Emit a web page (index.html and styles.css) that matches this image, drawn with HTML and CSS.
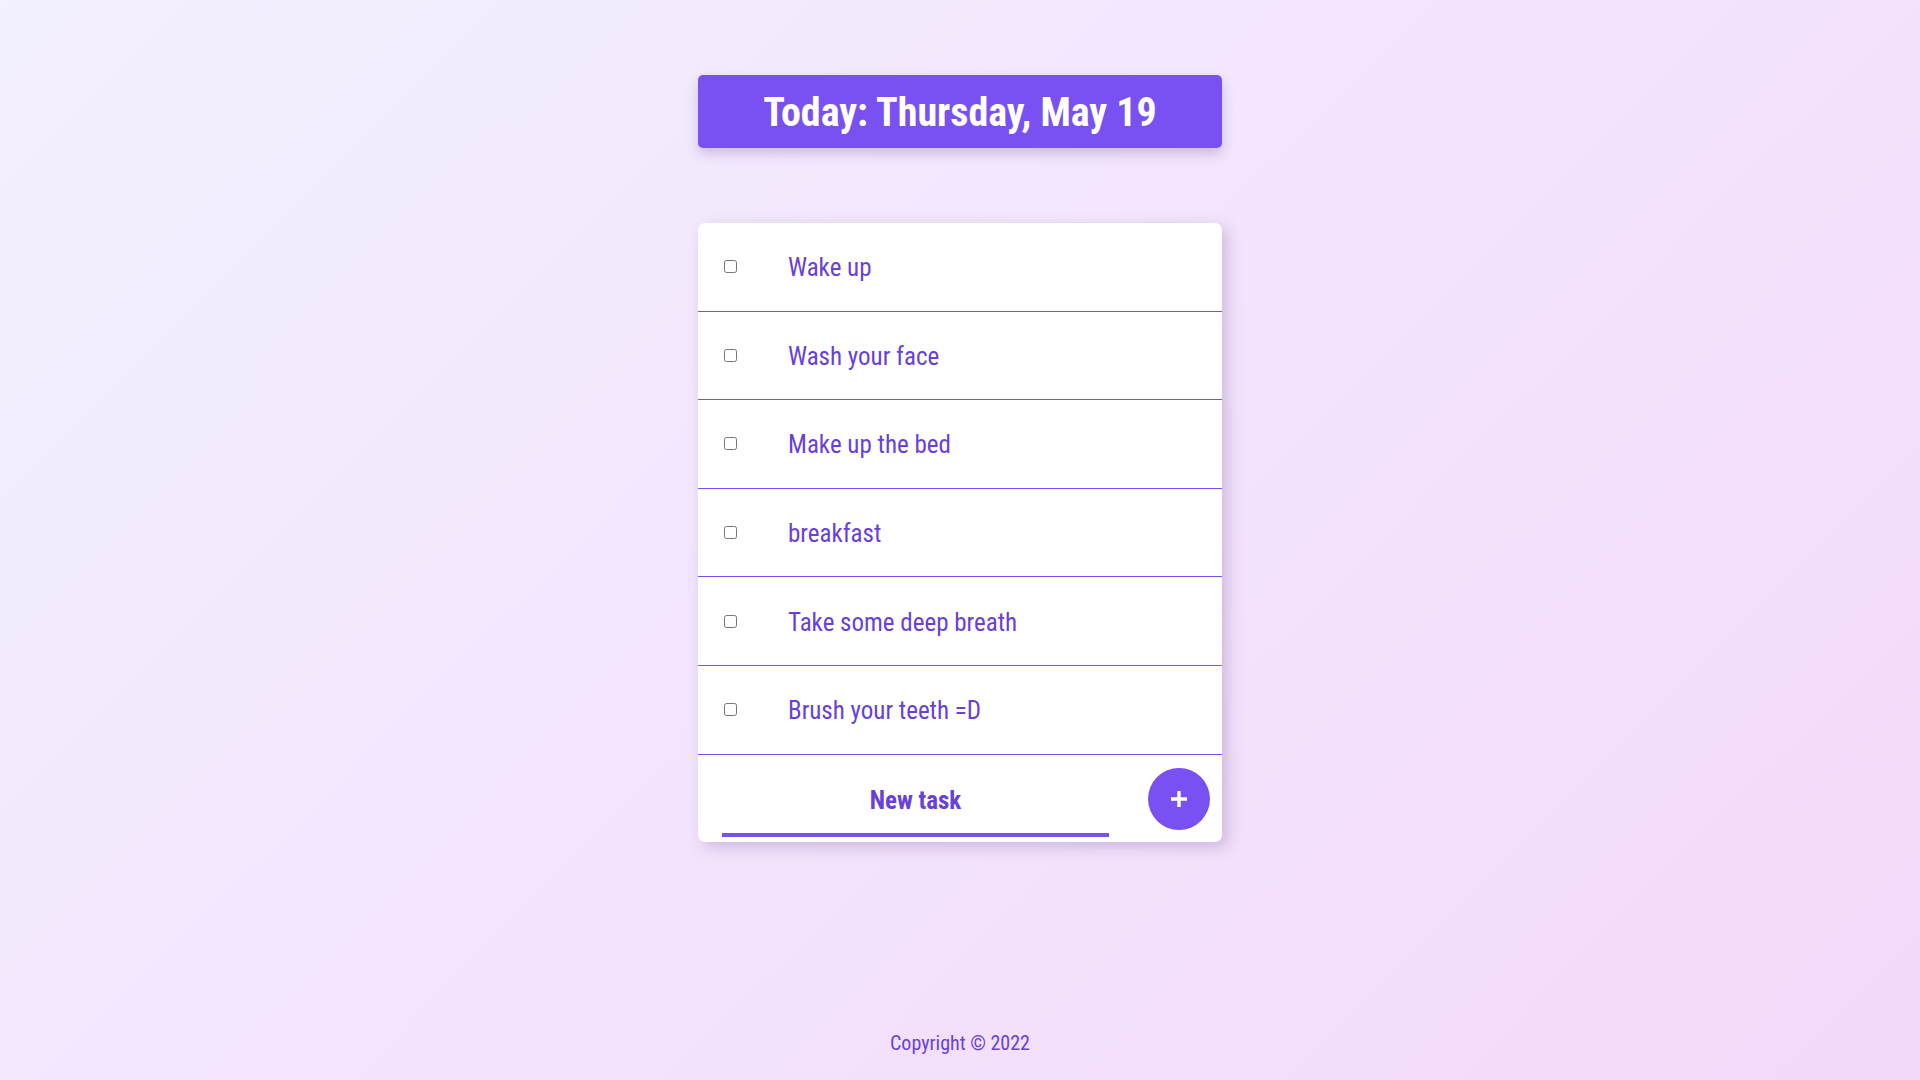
FILE: index.html
```html
<!DOCTYPE html>
<html lang="en">
<head>
<meta charset="utf-8">
<title>To-do</title>
<link rel="stylesheet" href="styles.css">
</head>
<body>
  <header class="heading">
    <h1 class="heading-title">Today: Thursday, May 19</h1>
  </header>
  <main class="box">
    <div class="item"><input type="checkbox" class="check"><p class="label">Wake up</p></div>
    <div class="item"><input type="checkbox" class="check"><p class="label">Wash your face</p></div>
    <div class="item"><input type="checkbox" class="check"><p class="label">Make up the bed</p></div>
    <div class="item"><input type="checkbox" class="check"><p class="label">breakfast</p></div>
    <div class="item"><input type="checkbox" class="check"><p class="label">Take some deep breath</p></div>
    <div class="item"><input type="checkbox" class="check"><p class="label">Brush your teeth =D</p></div>
    <form class="new-item">
      <input type="text" class="new-input" placeholder="New task" autocomplete="off">
      <button type="button" class="add-btn" aria-label="Add">
        <svg width="20" height="20" viewBox="0 0 20 20"><path d="M10 2v16M2 10h16" stroke="#fff" stroke-width="3.4" fill="none"/></svg>
      </button>
    </form>
  </main>
  <footer class="footer">Copyright © 2022</footer>
</body>
</html>
```

FILE: styles.css
```css
html, body {
  margin: 0;
  padding: 0;
}
body {
  min-height: 1080px;
  box-sizing: border-box;
  background: linear-gradient(135deg, #f3f0ff 0%, #f3d9fa 100%);
  font-family: "Roboto Condensed", "Liberation Sans Narrow", Roboto, sans-serif;
  font-stretch: condensed;
  color: #6741d9;
  display: flex;
  flex-direction: column;
  align-items: center;
}
.heading {
  margin-top: 75px;
  width: 524px;
  height: 73px;
  background: #7950f2;
  border-radius: 5px;
  box-shadow: 0 6px 12px rgba(90, 60, 140, 0.25);
  display: flex;
  align-items: center;
  justify-content: center;
}
.heading-title {
  margin: 0;
  padding-top: 2px;
  color: #fff;
  font-size: 40px;
  font-weight: 700;
}
.box {
  margin-top: 75px;
  width: 524px;
  background: #fff;
  border-radius: 7px;
  box-shadow: 5px 5px 15px rgba(90, 60, 140, 0.25);
  overflow: hidden;
}
.item {
  box-sizing: border-box;
  height: 88.6px;
  border-bottom: 1px solid #7950f2;
  display: flex;
  align-items: center;
  padding-left: 26px;
}
.check {
  margin: 0 51px 0 0;
  width: 13px;
  height: 13px;
}
.label {
  margin: 0;
  padding-top: 2px;
  font-size: 25px;
  color: #6741d9;
}
.new-item {
  height: 87px;
  display: flex;
  align-items: center;
  padding: 0 12px 0 24px;
}
.new-input {
  align-self: flex-start;
  width: 387px;
  box-sizing: border-box;
  height: 62px;
  margin-top: 20px;
  border: none;
  border-bottom: 4px solid #7950f2;
  outline: none;
  text-align: center;
  font-family: inherit;
  font-stretch: condensed;
  font-size: 25px;
  font-weight: 700;
  color: #6741d9;
  background: transparent;
  padding: 0 0 7px;
}
.new-input::placeholder {
  color: #6741d9;
  opacity: 1;
}
.add-btn {
  margin-left: auto;
  margin-top: 2px;
  width: 62px;
  height: 62px;
  border-radius: 50%;
  border: none;
  background: #7950f2;
  display: flex;
  align-items: center;
  justify-content: center;
  padding: 0;
  cursor: pointer;
}
.footer {
  margin-top: auto;
  margin-bottom: 25px;
  font-size: 20px;
}
```
